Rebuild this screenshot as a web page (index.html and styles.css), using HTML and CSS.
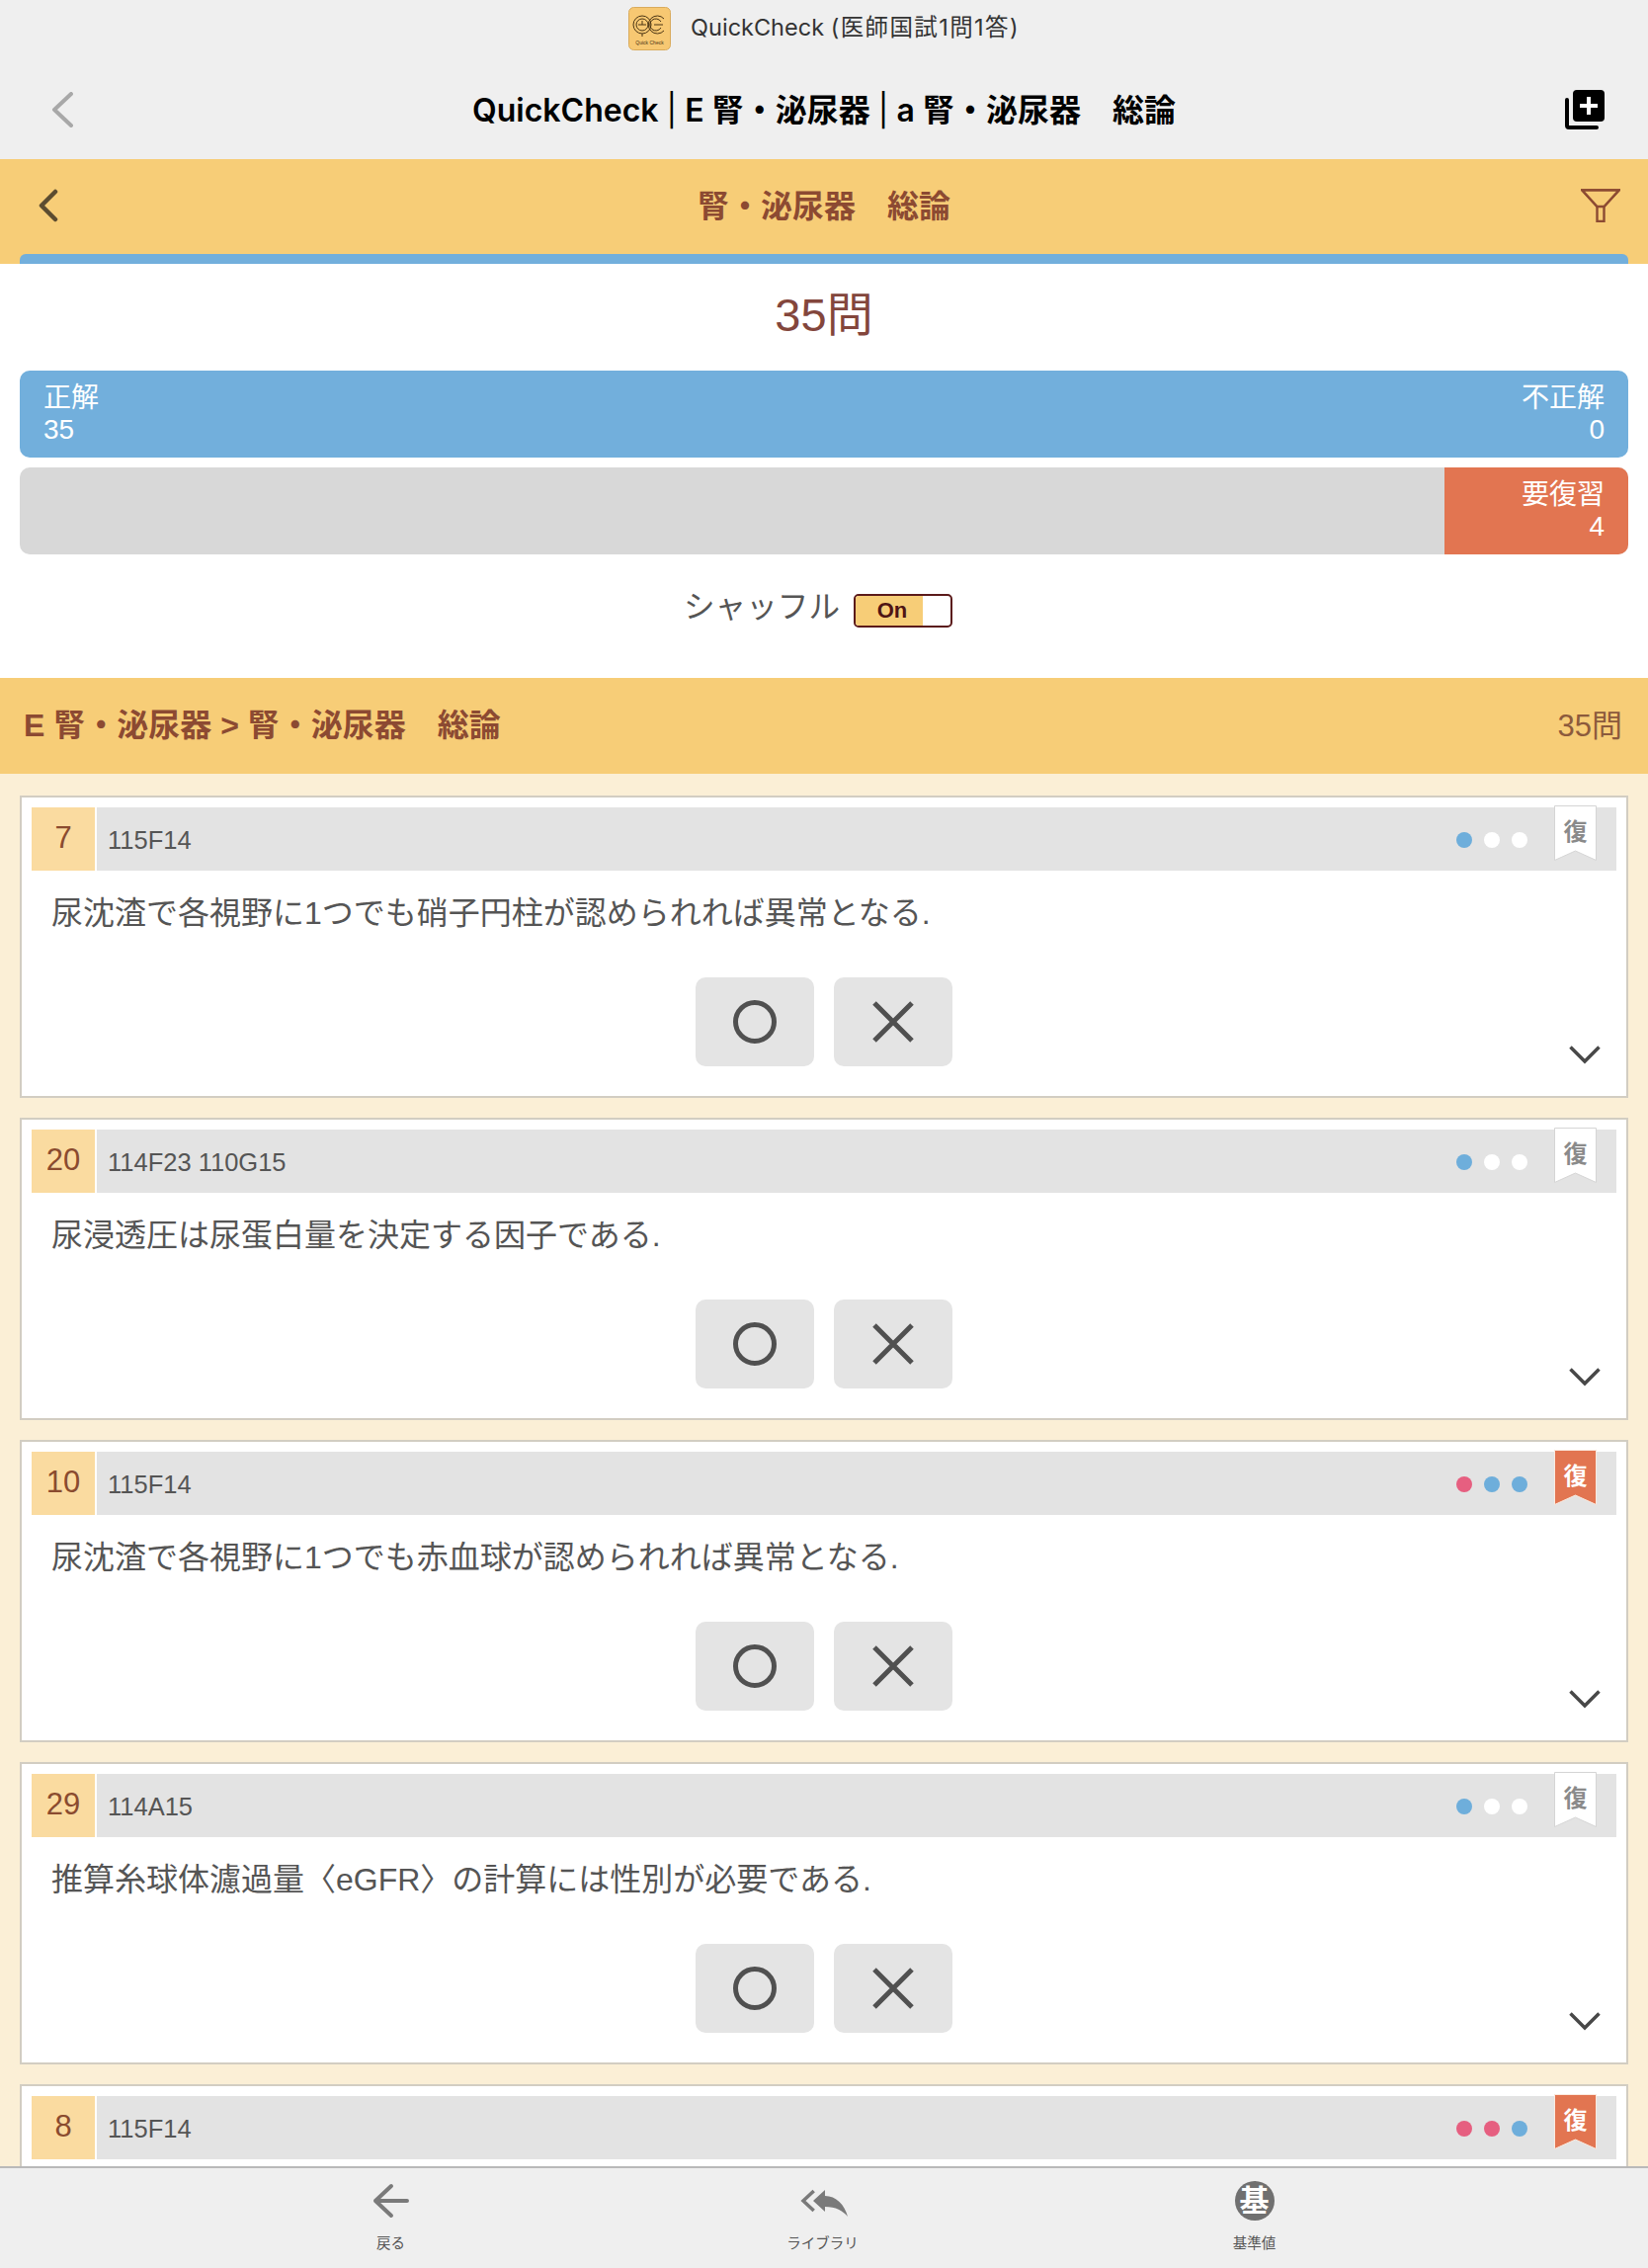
FILE: index.html
```html
<!DOCTYPE html>
<html lang="ja">
<head>
<meta charset="utf-8">
<title>QuickCheck</title>
<link rel="stylesheet" href="styles.css">
</head>
<body>
<div class="app">
  <header class="banner">
    <svg class="logo" viewBox="0 0 43 44">
      <rect x="0.5" y="0.5" width="42" height="43" rx="5" fill="#f7c872" stroke="#d9ab5c"/>
      <g fill="none" stroke="#4a3413" stroke-width="1">
        <circle cx="14" cy="18" r="9"/><circle cx="14" cy="18" r="6"/>
        <path d="M10 18h8M14 14v4M14 27l0 3"/>
        <path d="M36 12a9 9 0 1 0 0 12M33 15a6 6 0 1 0 0 6M26 18h9"/>
      </g>
      <text x="21.5" y="38" text-anchor="middle" class="logo-text">Quick Check</text>
    </svg>
    <span class="banner-text">QuickCheck <span class="banner-sub">(医師国試1問1答)</span></span>
  </header>
  <nav class="topnav">
    <svg class="top-back" viewBox="0 0 22 36"><path d="M20 2 3 18l17 16" fill="none" stroke="#a8a8a8" stroke-width="4" stroke-linecap="round" stroke-linejoin="round"/></svg>
    <h1 class="top-title">QuickCheck <span class="sep">|</span> E 腎・泌尿器 <span class="sep">|</span> a 腎・泌尿器　総論</h1>
    <svg class="top-add" viewBox="0 0 40 40">
      <path d="M2 10v26a2 2 0 0 0 2 2h28" fill="none" stroke="#000" stroke-width="4" stroke-linecap="round"/>
      <rect x="8" y="0" width="32" height="32" rx="4" fill="#000"/>
      <path d="M24 7v18M15 16h18" stroke="#fff" stroke-width="4"/>
    </svg>
  </nav>
  <main class="scroll">
    <section class="subhead">
      <div class="subnav">
        <svg class="sub-back" viewBox="0 0 20 34"><path d="M17 3 3 17l14 14" fill="none" stroke="#5c4c30" stroke-width="4.5" stroke-linecap="round" stroke-linejoin="round"/></svg>
        <h2 class="sub-title">腎・泌尿器　総論</h2>
        <svg class="filter" viewBox="0 0 40 34"><path d="M1.5 1.5h37L23.5 18v15h-7V18z" fill="none" stroke="#8c4a32" stroke-width="2.4"/><path d="M1.5 1.5h37L23.5 18h-7z" fill="#f7cd77" stroke="#8c4a32" stroke-width="2.4"/></svg>
      </div>
      <div class="strip"></div>
    </section>
    <section class="summary">
      <div class="count">35問</div>
      <div class="bar bar-blue">
        <div class="bar-cell"><div>正解</div><div>35</div></div>
        <div class="bar-cell bar-right"><div>不正解</div><div>0</div></div>
      </div>
      <div class="bar bar-gray">
        <div class="bar-cell bar-right bar-review"><div>要復習</div><div>4</div></div>
      </div>
      <div class="shuffle">
        <span class="shuffle-label">シャッフル</span>
        <span class="toggle"><span class="toggle-on">On</span></span>
      </div>
    </section>
    <div class="section-head">
      <span class="section-title">E 腎・泌尿器 &gt; 腎・泌尿器　総論</span>
      <span class="section-count">35問</span>
    </div>
    <div class="cards">

      <article class="card">
        <div class="card-head">
          <div class="num">7</div>
          <div class="meta">
            <span class="code">115F14</span>
            <span class="dots"><i class="dot dot-blue"></i><i class="dot"></i><i class="dot"></i></span>
          </div>
        </div>
        <svg class="mark" viewBox="0 0 43 56"><path d="M.5.5h42v55L21.5 46 .5 55.500z" fill="#fff" stroke="#d5d5d5"/><text x="21.500" y="35" text-anchor="middle" class="mark-text">復</text></svg>
        <p class="question">尿沈渣で各視野に1つでも硝子円柱が認められれば異常となる.</p>
        <div class="actions">
          <button class="answer"><svg class="glyph" viewBox="0 0 44 44"><circle cx="22" cy="22" r="19.500" fill="none" stroke="#505050" stroke-width="5"/></svg></button>
          <button class="answer"><svg class="glyph" viewBox="0 0 44 44"><path d="M3 3l38 38M41 3 3 41" fill="none" stroke="#505050" stroke-width="5"/></svg></button>
        </div>
        <svg class="more" viewBox="0 0 32 19"><path d="M1.500 1.500 16 16 30.500 1.500" fill="none" stroke="#484848" stroke-width="3.500"/></svg>
      </article>

      <article class="card">
        <div class="card-head">
          <div class="num">20</div>
          <div class="meta">
            <span class="code">114F23 110G15</span>
            <span class="dots"><i class="dot dot-blue"></i><i class="dot"></i><i class="dot"></i></span>
          </div>
        </div>
        <svg class="mark" viewBox="0 0 43 56"><path d="M.5.5h42v55L21.5 46 .5 55.500z" fill="#fff" stroke="#d5d5d5"/><text x="21.500" y="35" text-anchor="middle" class="mark-text">復</text></svg>
        <p class="question">尿浸透圧は尿蛋白量を決定する因子である.</p>
        <div class="actions">
          <button class="answer"><svg class="glyph" viewBox="0 0 44 44"><circle cx="22" cy="22" r="19.500" fill="none" stroke="#505050" stroke-width="5"/></svg></button>
          <button class="answer"><svg class="glyph" viewBox="0 0 44 44"><path d="M3 3l38 38M41 3 3 41" fill="none" stroke="#505050" stroke-width="5"/></svg></button>
        </div>
        <svg class="more" viewBox="0 0 32 19"><path d="M1.500 1.500 16 16 30.500 1.500" fill="none" stroke="#484848" stroke-width="3.500"/></svg>
      </article>

      <article class="card">
        <div class="card-head">
          <div class="num">10</div>
          <div class="meta">
            <span class="code">115F14</span>
            <span class="dots"><i class="dot dot-red"></i><i class="dot dot-blue"></i><i class="dot dot-blue"></i></span>
          </div>
        </div>
        <svg class="mark" viewBox="0 0 43 56"><path d="M.5.5h42v55L21.5 46 .5 55.500z" fill="#e27551" stroke="#fbeadf"/><text x="21.500" y="35" text-anchor="middle" class="mark-text mark-text-on">復</text></svg>
        <p class="question">尿沈渣で各視野に1つでも赤血球が認められれば異常となる.</p>
        <div class="actions">
          <button class="answer"><svg class="glyph" viewBox="0 0 44 44"><circle cx="22" cy="22" r="19.500" fill="none" stroke="#505050" stroke-width="5"/></svg></button>
          <button class="answer"><svg class="glyph" viewBox="0 0 44 44"><path d="M3 3l38 38M41 3 3 41" fill="none" stroke="#505050" stroke-width="5"/></svg></button>
        </div>
        <svg class="more" viewBox="0 0 32 19"><path d="M1.500 1.500 16 16 30.500 1.500" fill="none" stroke="#484848" stroke-width="3.500"/></svg>
      </article>

      <article class="card">
        <div class="card-head">
          <div class="num">29</div>
          <div class="meta">
            <span class="code">114A15</span>
            <span class="dots"><i class="dot dot-blue"></i><i class="dot"></i><i class="dot"></i></span>
          </div>
        </div>
        <svg class="mark" viewBox="0 0 43 56"><path d="M.5.5h42v55L21.5 46 .5 55.500z" fill="#fff" stroke="#d5d5d5"/><text x="21.500" y="35" text-anchor="middle" class="mark-text">復</text></svg>
        <p class="question">推算糸球体濾過量〈eGFR〉の計算には性別が必要である.</p>
        <div class="actions">
          <button class="answer"><svg class="glyph" viewBox="0 0 44 44"><circle cx="22" cy="22" r="19.500" fill="none" stroke="#505050" stroke-width="5"/></svg></button>
          <button class="answer"><svg class="glyph" viewBox="0 0 44 44"><path d="M3 3l38 38M41 3 3 41" fill="none" stroke="#505050" stroke-width="5"/></svg></button>
        </div>
        <svg class="more" viewBox="0 0 32 19"><path d="M1.500 1.500 16 16 30.500 1.500" fill="none" stroke="#484848" stroke-width="3.500"/></svg>
      </article>

      <article class="card">
        <div class="card-head">
          <div class="num">8</div>
          <div class="meta">
            <span class="code">115F14</span>
            <span class="dots"><i class="dot dot-red"></i><i class="dot dot-red"></i><i class="dot dot-blue"></i></span>
          </div>
        </div>
        <svg class="mark" viewBox="0 0 43 56"><path d="M.5.5h42v55L21.5 46 .5 55.500z" fill="#e27551" stroke="#fbeadf"/><text x="21.500" y="35" text-anchor="middle" class="mark-text mark-text-on">復</text></svg>
      </article>

    </div>
  </main>
  <footer class="tabbar">
    <div class="tab">
      <svg class="tab-icon" viewBox="0 0 44 40"><path d="M22 5 6 20l16 15M6 20h32" fill="none" stroke="#7a7a7a" stroke-width="4" stroke-linecap="round" stroke-linejoin="round"/></svg>
      <span class="tab-label">戻る</span>
    </div>
    <div class="tab">
      <svg class="tab-icon tab-icon-wide" viewBox="0 0 50 40"><path d="M15.700 10 5 20l10.700 10" fill="none" stroke="#7a7a7a" stroke-width="3.500"/><path d="M15 20 27 9v6C38 15 47 24 50 36 45 30 38 26 27 26v5z" fill="#7a7a7a"/></svg>
      <span class="tab-label">ライブラリ</span>
    </div>
    <div class="tab">
      <span class="tab-circle">基</span>
      <span class="tab-label">基準値</span>
    </div>
  </footer>
</div>
</body>
</html>
```
FILE: styles.css
```css
* { box-sizing: border-box; }
html, body { margin: 0; height: 100%; overflow: hidden; }
body {
  font-family: "Liberation Sans", "Noto Sans CJK JP", sans-serif;
  color: #555;
  background: #efefef;
}
.app { height: 100vh; display: flex; flex-direction: column; }

.banner {
  height: 57px;
  flex: none;
  display: flex;
  align-items: center;
  justify-content: center;
  gap: 20px;
  background: #efefef;
}
.logo { width: 43px; height: 44px; flex: none; }
.logo-text { font: 5px "Liberation Sans", sans-serif; fill: #4a3413; }
.banner-text {
  font-family: Inter, "Noto Sans CJK JP", sans-serif;
  font-size: 23.500px;
  line-height: 28px;
  padding-bottom: 1px;
  color: #333;
  white-space: nowrap;
}
.banner-sub { letter-spacing: 1.400px; }
.topnav {
  height: 104px;
  flex: none;
  display: grid;
  grid-template-columns: 1fr auto 1fr;
  align-items: center;
  padding: 4px 44px 0 52px;
  background: #efefef;
}
.top-back { width: 22px; height: 36px; }
.top-add { width: 40px; height: 40px; justify-self: end; }
.top-title {
  margin: 0 0 4px -8px;
  font-family: Inter, "Noto Sans CJK JP", sans-serif;
  font-size: 32px;
  font-weight: 600;
  color: #000;
  white-space: nowrap;
}
.sep { font-weight: 400; }

.scroll { flex: 1; min-height: 0; overflow: hidden; background: #fbefd6; }

.subhead { background: #f7cd77; padding: 0 20px; }
.subnav {
  height: 96px;
  display: grid;
  grid-template-columns: 1fr auto 1fr;
  align-items: center;
  padding: 0 8px 2px;
}
.sub-back { width: 20px; height: 34px; margin-left: 11px; }
.filter { width: 40px; height: 34px; justify-self: end; }
.sub-title {
  margin: 0 0 5px;
  font-size: 32px;
  font-weight: 700;
  color: #8c4a32;
}
.strip { height: 10px; background: #72afdc; border-radius: 6px 6px 0 0; }

.summary { background: #fff; padding: 24px 20px 51px; }
.count {
  text-align: center;
  font-size: 47px;
  line-height: 56px;
  color: #83463c;
  margin-bottom: 28px;
}
.bar {
  height: 88px;
  border-radius: 10px;
  overflow: hidden;
  display: flex;
  justify-content: space-between;
  color: #fff;
  font-size: 28px;
  line-height: 32px;
}
.bar-blue { background: #72afdc; margin-bottom: 10px; }
.bar-gray { background: #d8d8d8; justify-content: flex-end; }
.bar-cell { padding: 12px 24px; }
.bar-right { text-align: right; }
.bar-review { width: 186px; background: #e27551; }
.shuffle {
  margin-top: 40px;
  height: 34px;
  display: flex;
  align-items: center;
  justify-content: center;
  gap: 14px;
  padding-right: 12px;
}
.shuffle-label { font-size: 31.600px; line-height: 40px; margin-bottom: 8px; color: #555; white-space: nowrap; }
.toggle {
  width: 100px;
  height: 34px;
  border: 2.500px solid #5b1a1a;
  border-radius: 5px;
  background: #fff;
  overflow: hidden;
  display: flex;
}
.toggle-on {
  width: 68px;
  padding-left: 6px;
  background: #f7cd77;
  color: #4f1414;
  font-size: 22px;
  font-weight: 700;
  line-height: 29px;
  text-align: center;
}

.section-head {
  height: 97px;
  background: #f7cd77;
  display: flex;
  align-items: center;
  justify-content: space-between;
  padding: 0 26px 7px 24px;
}
.section-title { font-size: 32px; font-weight: 700; color: #8c4a32; }
.section-count { font-size: 31px; color: #8c5a3c; }

.cards { padding: 22px 20px; }
.card {
  position: relative;
  height: 306px;
  margin-bottom: 20px;
  background: #fff;
  border: 2px solid #d2cdc2;
  padding: 10px;
}
.card-head { display: flex; gap: 2px; height: 64px; }
.num {
  width: 64px;
  flex: none;
  background: #fadba0;
  color: #8a4b2f;
  font-size: 31px;
  line-height: 62px;
  text-align: center;
}
.meta {
  flex: 1;
  background: #e3e3e3;
  display: flex;
  align-items: center;
  justify-content: space-between;
  padding: 2px 90px 0 11px;
}
.code { font-size: 25.500px; color: #555; }
.dots { display: flex; gap: 12px; }
.dot { width: 16px; height: 16px; border-radius: 50%; background: #fff; display: block; }
.dot-blue { background: #6eaedb; }
.dot-red { background: #e65f80; }
.mark { position: absolute; top: 8px; right: 30px; width: 43px; height: 56px; }
.mark-text { font-size: 24px; fill: #8a8a8a; font-weight: 700; }
.mark-text-on { fill: #fff; }
.question {
  margin: 23px 0 45px;
  padding-left: 20px;
  font-size: 32px;
  line-height: 40px;
  color: #555;
  white-space: nowrap;
}
.actions { display: flex; justify-content: center; gap: 20px; }
.answer {
  width: 120px;
  height: 90px;
  padding: 0;
  border: 0;
  border-radius: 10px;
  background: #e4e4e4;
  display: flex;
  align-items: center;
  justify-content: center;
}
.glyph { width: 44px; height: 44px; }
.more { position: absolute; right: 26px; bottom: 32px; width: 32px; height: 19px; }

.tabbar {
  height: 103px;
  flex: none;
  background: #efefef;
  border-top: 2px solid #b9b9b9;
  display: grid;
  grid-template-columns: repeat(3, 437px);
  justify-content: center;
  padding-right: 3px;
}
.tab {
  display: flex;
  flex-direction: column;
  align-items: center;
  padding-top: 13px;
}
.tab-icon { width: 44px; height: 40px; flex: none; }
.tab-icon-wide { width: 50px; }
.tab-circle {
  width: 40px;
  height: 40px;
  flex: none;
  border-radius: 50%;
  background: #707070;
  color: #fff;
  font-size: 30px;
  font-weight: 700;
  line-height: 40px;
  text-align: center;
}
.tab-label { margin-top: 13px; font-size: 14.500px; line-height: 20px; color: #555; white-space: nowrap; }
```
